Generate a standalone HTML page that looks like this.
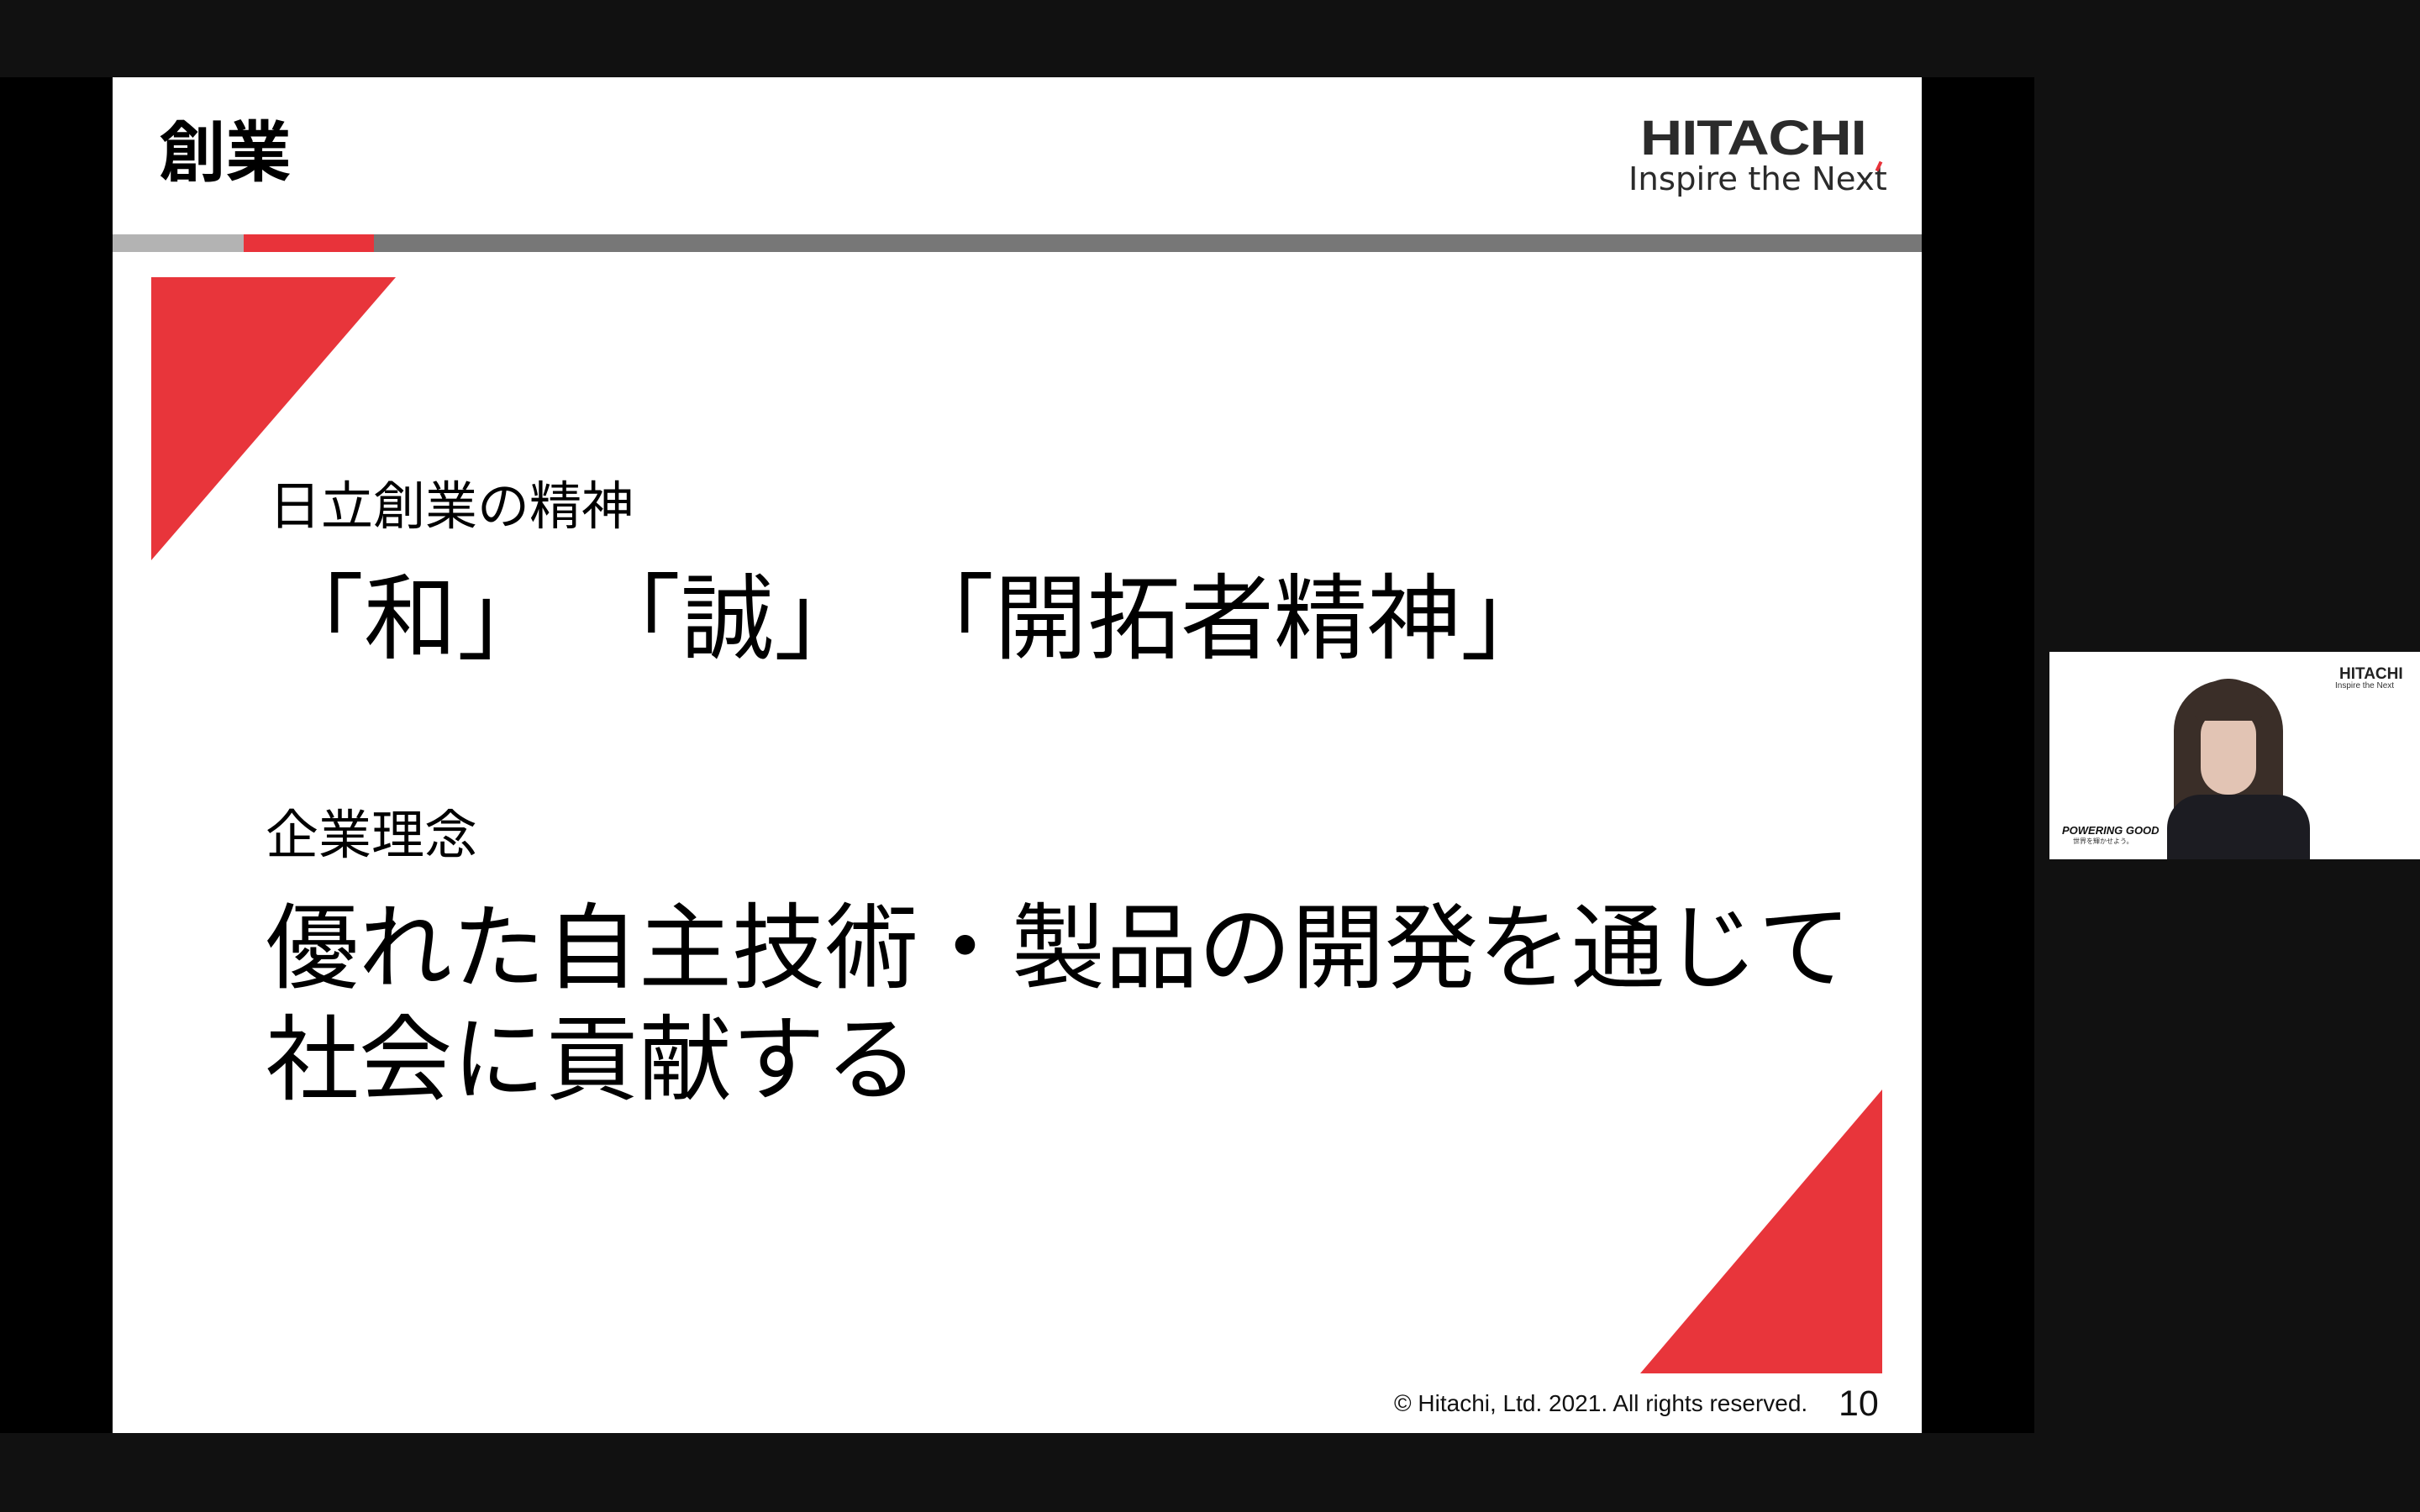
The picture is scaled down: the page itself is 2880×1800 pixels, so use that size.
<!DOCTYPE html>
<html><head><meta charset="utf-8"><style>
*{margin:0;padding:0}
body{width:2880px;height:1800px;background:#111;position:relative;overflow:hidden;font-family:"Liberation Sans","Noto Sans CJK JP",sans-serif}
.a{position:absolute;white-space:nowrap;line-height:1}
.jp{font-family:"Noto Sans CJK JP",sans-serif;color:#000}
</style></head><body>
<div class="a" style="left:0;top:92px;width:134px;height:1614px;background:#000"></div>
<div class="a" style="left:2287px;top:92px;width:134px;height:1614px;background:#000"></div>
<div class="a" style="left:134px;top:92px;width:2153px;height:1614px;background:#fff"></div>
<div class="a" style="left:134px;top:279px;width:156px;height:21px;background:#b3b3b3"></div>
<div class="a" style="left:290px;top:279px;width:155px;height:21px;background:#e8333a"></div>
<div class="a" style="left:445px;top:279px;width:1842px;height:21px;background:#777"></div>
<svg class="a" style="left:0;top:0" width="2880" height="1800">
<polygon points="180,330 471,330 180,667" fill="#e8353b"/>
<polygon points="2240,1297 2240,1635 1952,1635" fill="#e8353b"/>
</svg>
<div class="a jp" style="left:189px;top:135px;font-size:79px;font-weight:bold">創業</div>
<div class="a" style="left:1952px;top:136px;font-size:58px;font-weight:bold;color:#2b2b2b;transform:scaleX(1.2);transform-origin:0 0;letter-spacing:-1px">HITACHI</div>
<div class="a" style="left:1938px;top:194px;font-size:38px;color:#2b2b2b;font-family:'DejaVu Sans Condensed','Liberation Sans',sans-serif;transform:scaleX(1.13);transform-origin:0 0">Inspire the Next</div>
<div class="a" style="left:2234px;top:192px;width:4px;height:12px;background:#e8333a;transform:rotate(25deg)"></div>
<div class="a jp" style="left:320px;top:566px;font-size:62px">日立創業の精神</div>
<div class="a jp" style="left:322px;top:671px;font-size:111px">「和」</div>
<div class="a jp" style="left:699px;top:671px;font-size:111px">「誠」</div>
<div class="a jp" style="left:1072px;top:671px;font-size:111px">「開拓者精神」</div>
<div class="a jp" style="left:316px;top:958px;font-size:63px">企業理念</div>
<div class="a jp" style="left:316px;top:1052px;font-size:111px;line-height:133px">優れた自主技術・製品の開発を通じて<br>社会に貢献する</div>
<div class="a" style="left:1659px;top:1657px;font-size:28px;color:#111">© Hitachi, Ltd. 2021. All rights reserved.</div>
<div class="a" style="left:2188px;top:1650px;font-size:43px;color:#111">10</div>
<!-- webcam -->
<div class="a" style="left:2439px;top:776px;width:441px;height:247px;background:#fff;overflow:hidden">
 <div class="a" style="left:345px;top:17px;font-size:19px;font-weight:bold;color:#222">HITACHI</div>
 <div class="a" style="left:340px;top:36px;font-size:10px;color:#333">Inspire the Next</div>
 <div class="a" style="left:15px;top:206px;font-size:13px;font-style:italic;font-weight:bold;color:#111">POWERING GOOD</div>
 <div class="a" style="left:28px;top:222px;font-size:8px;color:#333">世界を輝かせよう。</div>
 <div class="a" style="left:148px;top:34px;width:130px;height:220px;background:#3a2e28;border-radius:60px 60px 10px 10px"></div>
 <div class="a" style="left:140px;top:170px;width:170px;height:90px;background:#1c1c22;border-radius:40px 40px 0 0"></div>
 <div class="a" style="left:180px;top:70px;width:66px;height:100px;background:#e2c4b4;border-radius:28px 28px 32px 32px"></div>
 <div class="a" style="left:172px;top:32px;width:82px;height:50px;background:#3a2e28;border-radius:40px 40px 10px 10px"></div>
</div>
</body></html>
